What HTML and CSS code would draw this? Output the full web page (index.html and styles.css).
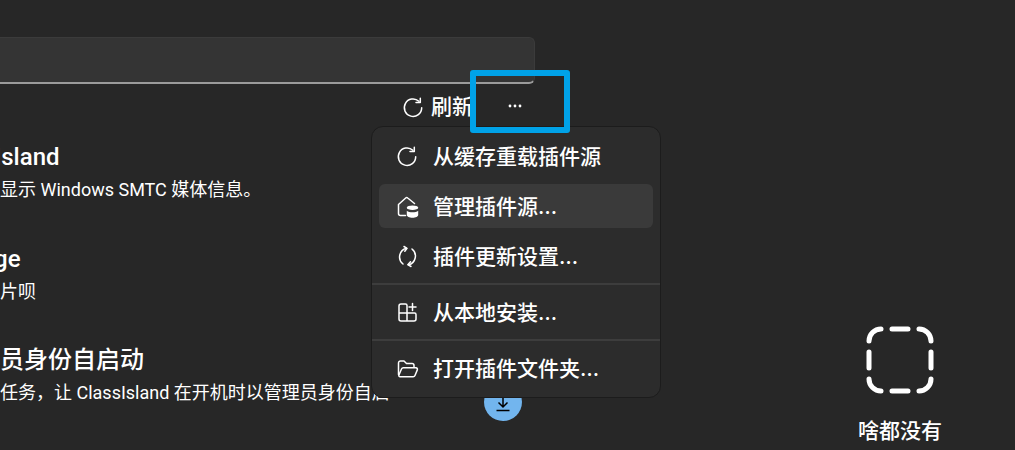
FILE: index.html
```html
<!DOCTYPE html>
<html lang="zh-CN">
<head>
  <meta charset="UTF-8">
  <link rel="stylesheet" href="styles.css">
  <title>插件</title>
</head>
<body>
  <div class="page">
    <div class="left-pane">
      <div class="search-box"></div>
      <div class="toolbar">
        <button class="tool-btn">
          <svg class="icon" viewBox="0 0 21 21"><path d="M18.700 10.700a8.700 8.700 0 1 1-2.800-6.400"/><path d="M17.300 1.300v4.300h-4.300"/></svg>
          <span>刷新</span>
        </button>
        <button class="more-btn">
          <svg viewBox="0 0 16 4" width="16" height="4"><circle cx="3" cy="2" r="1.400"/><circle cx="8" cy="2" r="1.400"/><circle cx="13" cy="2" r="1.400"/></svg>
        </button>
      </div>
      <div class="plugin-list">
        <div class="plugin">
          <div class="plugin-title">MediaIsland</div>
          <div class="plugin-desc">在组件中显示 Windows SMTC 媒体信息。</div>
        </div>
        <div class="plugin">
          <div class="plugin-title">Package</div>
          <div class="plugin-desc">来看看图片呗</div>
        </div>
        <div class="plugin">
          <div class="plugin-title">以管理员身份自启动</div>
          <div class="plugin-desc">创建计划任务，让 ClassIsland 在开机时以管理员身份自启</div>
        </div>
      </div>
    </div>

    <div class="empty-pane">
      <svg class="empty-icon" viewBox="0 0 68 68" width="68" height="68">
        <path d="M3 15A12 12 0 0 1 15 3M26 3H42M53 3A12 12 0 0 1 65 15M65 26V42M65 53A12 12 0 0 1 53 65M42 65H26M15 65A12 12 0 0 1 3 53M3 42V26"/>
      </svg>
      <div class="empty-text">啥都没有</div>
    </div>

    <button class="fab">
      <svg viewBox="0 0 20 20" width="20" height="20"><path d="M10 2v12M5.500 9.500 10 14l4.500-4.500M3.500 17.500h13"/></svg>
    </button>

    <div class="menu">
      <div class="menu-item">
        <svg class="icon" viewBox="0 0 21 21"><path d="M18.700 10.700a8.700 8.700 0 1 1-2.800-6.400"/><path d="M17.300 1.300v4.300h-4.300"/></svg>
        <span>从缓存重载插件源</span>
      </div>
      <div class="menu-item active">
        <svg class="icon" viewBox="0 0 21 21">
          <path d="M8.500 19.500H3.500a2 2 0 0 1-2-2V8.500L8.700 2a1.500 1.500 0 0 1 2 0L17.500 7.500"/>
          <ellipse class="fill" cx="15.500" cy="11.700" rx="5.700" ry="2.300"/>
          <path class="fill" d="M9.800 14.800c1.200 1 3.400 1.500 5.700 1.500s4.500-.5 5.700-1.500V19c0 1.500-2.500 2.700-5.700 2.700S9.800 20.500 9.800 19z"/>
        </svg>
        <span>管理插件源…</span>
      </div>
      <div class="menu-item">
        <svg class="icon" viewBox="0 0 21 21"><path d="M6 18A9 9 0 0 1 9.500 2.200"/><path d="M15 3a9 9 0 0 1-3.500 15.800"/><path d="M7 0.500 10 2.300 7.800 5.200"/><path d="M13.500 15.800 10.800 18.700 14 20.500"/></svg>
        <span>插件更新设置…</span>
      </div>
      <div class="menu-sep"></div>
      <div class="menu-item">
        <svg class="icon" viewBox="0 0 21 21"><path d="M10 4.500V3.500a1.500 1.500 0 0 0-1.500-1.500H4a2 2 0 0 0-2 2V17a2 2 0 0 0 2 2H17a2 2 0 0 0 2-2V12.500a1.500 1.500 0 0 0-1.500-1.500H2M10 4v15"/><path d="M15.500 1.500v7M12 5h7"/></svg>
        <span>从本地安装…</span>
      </div>
      <div class="menu-sep"></div>
      <div class="menu-item">
        <svg class="icon" viewBox="0 0 21 21"><path d="M1.500 16.500V5a2 2 0 0 1 2-2H7l2.500 2.500H15a2 2 0 0 1 2 2v1.500"/><path d="M1.800 17.300 4.500 11a2 2 0 0 1 1.800-1.200H19a1.500 1.500 0 0 1 1.300 2.100L18 17.500a2 2 0 0 1-1.800 1.200H3a1.200 1.200 0 0 1-1.200-1.400z"/></svg>
        <span>打开插件文件夹…</span>
      </div>
    </div>

    <div class="highlight-box"></div>
  </div>
</body>
</html>
```

FILE: styles.css
```css
* {
  box-sizing: border-box;
}

html, body {
  margin: 0;
  height: 100%;
}

body {
  background-color: #272727;
  color: #fff;
  font-family: Roboto, "Noto Sans CJK SC", sans-serif;
  overflow: hidden;
}

.page {
  position: relative;
  display: flex;
  justify-content: space-between;
  width: 1015px;
  height: 450px;
  overflow: hidden;
}

button {
  font-family: inherit;
  color: inherit;
  background: none;
  border: none;
  padding: 0;
}

.icon {
  width: 21px;
  height: 21px;
  flex: none;
  fill: none;
  overflow: visible;
  stroke: #fff;
  stroke-width: 1.500;
  stroke-linecap: round;
  stroke-linejoin: round;
}

.icon .fill {
  fill: #fff;
  stroke: none;
}

.left-pane {
  width: 535px;
  padding-top: 37px;
}

.search-box {
  height: 47px;
  margin-left: -20px;
  background-color: #343434;
  border: 1px solid #3b3b3b;
  border-bottom: 2px solid #9b9b9b;
  border-radius: 6px;
}

.toolbar {
  display: flex;
  justify-content: flex-end;
  align-items: center;
  height: 46px;
}

.tool-btn {
  display: flex;
  align-items: center;
  gap: 7px;
  font-size: 21px;
  font-weight: 500;
  line-height: 28px;
  margin-right: 22px;
}

.more-btn {
  display: flex;
  align-items: center;
  justify-content: center;
  width: 40px;
  height: 30px;
  margin-top: -2px;
}

.more-btn svg {
  fill: #fff;
}

.plugin-list {
  margin-left: -72px;
  margin-top: 10px;
  white-space: nowrap;
}

.plugin {
  height: 101.500px;
}

.plugin-title {
  font-size: 24px;
  font-weight: 500;
  line-height: 34px;
}

.plugin-desc {
  font-size: 18px;
  line-height: 30px;
  padding-top: 1px;
}

.empty-pane {
  width: 230px;
  padding-top: 326px;
  display: flex;
  flex-direction: column;
  align-items: center;
}

.empty-icon {
  fill: none;
  stroke: #fff;
  stroke-width: 5;
  stroke-linecap: round;
}

.empty-text {
  margin-top: 20px;
  font-size: 21px;
  font-weight: 500;
  line-height: 34px;
}

.fab {
  position: absolute;
  left: 484px;
  top: 383px;
  width: 38px;
  height: 38px;
  border-radius: 50%;
  background-color: #72b5ee;
  display: flex;
  align-items: center;
  justify-content: center;
}

.fab svg {
  fill: none;
  stroke: #000;
  stroke-width: 1.500;
  margin-top: 2px;
}

.menu {
  position: absolute;
  left: 371px;
  top: 126px;
  width: 290px;
  height: 272px;
  padding: 7px;
  background-color: #2c2c2c;
  border: 1px solid #1c1c1c;
  border-radius: 12px;
  display: flex;
  flex-direction: column;
  font-family: Inter, "Noto Sans CJK SC", sans-serif;
}

.menu-item {
  flex: none;
  display: flex;
  align-items: center;
  gap: 15px;
  height: 44px;
  padding-left: 18px;
  border-radius: 6px;
  font-size: 21px;
  font-weight: 500;
  margin-bottom: 6px;
}

.menu-item span {
  margin-top: -2px;
}

.menu-item:last-child {
  margin-bottom: 0;
}

.menu-item.active {
  background-color: #3a3a3a;
}

.menu-sep {
  flex: none;
  height: 2px;
  margin: -1px -7px 5px;
  background-color: #3d3d3d;
}

.highlight-box {
  position: absolute;
  left: 470px;
  top: 70px;
  width: 100px;
  height: 63px;
  border: 6px solid #00a2e8;
  border-radius: 3px;
}
```
